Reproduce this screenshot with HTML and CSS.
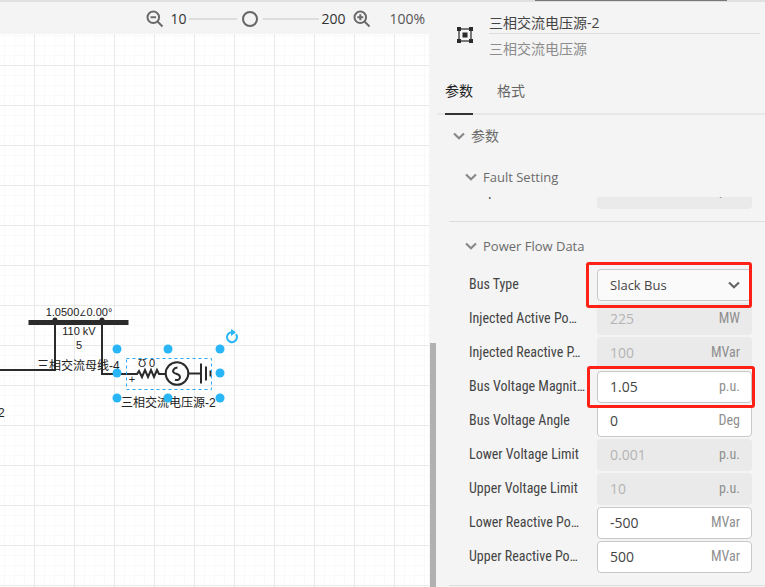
FILE: index.html
```html
<!DOCTYPE html>
<html lang="zh-CN">
<head>
<meta charset="utf-8">
<title>三相交流电压源-2</title>
<link rel="stylesheet" href="styles.css">
</head>
<body>
<svg class="defs" aria-hidden="true">
  <symbol id="chevron" viewBox="0 0 12 8"><path d="M1 1.5 6 6.3 11 1.5" fill="none" stroke="currentColor" stroke-width="2.2"/></symbol>
</svg>
<div class="app">
  <main class="workspace">
    <div class="toolbar">
      <button class="icon-button" type="button" aria-label="缩小">
        <svg width="18" height="18" viewBox="0 0 18 18" fill="none" stroke="currentColor" stroke-width="2"><circle cx="7.3" cy="7.3" r="5.8"/><path d="M4.5 7.3h5.6M11.5 11.5l5 5"/></svg>
      </button>
      <label for="zoom" class="zoom-min">10</label>
      <input id="zoom" class="zoom-range" type="range" min="10" max="200" value="98">
      <span class="zoom-max">200</span>
      <button class="icon-button" type="button" aria-label="放大">
        <svg width="18" height="18" viewBox="0 0 18 18" fill="none" stroke="currentColor" stroke-width="2"><circle cx="7.3" cy="7.3" r="5.8"/><path d="M4.3 7.3h6M7.3 4.3v6M11.5 11.5l5 5"/></svg>
      </button>
      <span class="zoom-value">100%</span>
    </div>
    <div class="canvas">
      <svg class="diagram" width="260" height="400" viewBox="0 34 260 400">
        <g fill="none" stroke="#2b2b2b" stroke-width="2">
          <path d="M0 370H55V323M102 323V374H135"/>
          <path d="M135 374h2l2-3 3 6 3-7 3 7 3-7 3 7 3-7 2 4h6M188.500 373.500H200"/>
          <circle cx="177" cy="373.500" r="11.300"/>
          <path d="M177.500 367.500c-4 .5-5.500 3.500-3.500 5.200 1.700 1.300 6 1.300 6 4.300 0 2.500-2.200 3.500-5 2.700"/>
          <path d="M201 363.500v20M206 366.500v14M210.500 370.500v6"/>
        </g>
        <path d="M28.500 320h100v5h-100zM52.500 320a2.500 2.500 0 0 1 5 0zM99.500 320a2.500 2.500 0 0 1 5 0z" fill="#2b2b2b"/>
        <g class="values">
          <text x="79" y="316">1.0500<tspan class="angle">∠</tspan>0.00°</text>
          <text x="79" y="335">110 kV</text>
          <text x="79" y="349">5</text>
          <text x="142" y="367">Ʊ</text>
          <text x="152" y="367">0</text>
          <text x="132" y="383">+</text>
        </g>
        <g class="names">
          <text x="37" y="370">三相交流母线-4</text>
          <text x="121" y="407">三相交流电压源-2</text>
          <text x="-2" y="417">2</text>
        </g>
        <rect x="126.500" y="358.500" width="85" height="31" fill="none" stroke="#29a6f5" stroke-dasharray="3 3"/>
        <g fill="#29b6f6">
          <circle cx="117" cy="349" r="4.500"/><circle cx="168" cy="349" r="4.500"/><circle cx="220" cy="349" r="4.500"/>
          <circle cx="117" cy="373" r="4.500"/><circle cx="220" cy="373" r="4.500"/>
          <circle cx="117" cy="398" r="4.500"/><circle cx="168" cy="398" r="4.500"/><circle cx="220" cy="398" r="4.500"/>
        </g>
        <path d="M231.500 332.200a5 5 0 1 0 4.500 2" fill="none" stroke="#29b6f6" stroke-width="2"/>
        <path d="M231 329l5 3.200-5 3.800z" fill="#29b6f6"/>
      </svg>
    </div>
  </main>
  <div class="gutter"><div class="scroll-thumb"></div></div>
  <aside class="panel">
    <header class="panel-header">
      <svg width="16" height="16" viewBox="0 0 16 16" aria-hidden="true"><path d="M2 2h12v12H2z" fill="none" stroke="#777" stroke-width="2"/><path d="M0 0h4v4H0zM12 0h4v4h-4zM0 12h4v4H0zM12 12h4v4h-4zM5.500 5.500h5v5h-5z" fill="#2b2b2b"/></svg>
      <div class="titles">
        <input class="title" type="text" aria-label="名称" value="三相交流电压源-2">
        <div class="subtitle">三相交流电压源</div>
      </div>
    </header>
    <nav class="tabs">
      <button class="tab active" type="button">参数</button>
      <button class="tab" type="button">格式</button>
    </nav>
    <h2 class="heading"><svg class="chevron"><use href="#chevron"/></svg>参数</h2>
    <section class="group">
      <h3 class="heading sub"><svg class="chevron"><use href="#chevron"/></svg>Fault Setting</h3>
      <div class="scrolled">
        <div class="row"><label for="drop">Drop</label><div class="field off"><input id="drop" type="text" disabled><span class="unit">p.u.</span></div></div>
      </div>
    </section>
    <section class="group">
      <h3 class="heading sub flow"><svg class="chevron"><use href="#chevron"/></svg>Power Flow Data</h3>
      <div class="rows">
        <div class="row"><label for="type">Bus Type</label><div class="field pick marked"><select id="type"><option>Slack Bus</option></select><svg class="chevron arrow"><use href="#chevron"/></svg></div></div>
        <div class="row"><label for="p">Injected Active Po…</label><div class="field off"><input id="p" type="text" value="225" disabled><span class="unit">MW</span></div></div>
        <div class="row"><label for="q">Injected Reactive P…</label><div class="field off"><input id="q" type="text" value="100" disabled><span class="unit">MVar</span></div></div>
        <div class="row"><label for="v">Bus Voltage Magnit…</label><div class="field marked"><input id="v" type="text" value="1.05"><span class="unit">p.u.</span></div></div>
        <div class="row"><label for="a">Bus Voltage Angle</label><div class="field"><input id="a" type="text" value="0"><span class="unit">Deg</span></div></div>
        <div class="row"><label for="vl">Lower Voltage Limit</label><div class="field off"><input id="vl" type="text" value="0.001" disabled><span class="unit">p.u.</span></div></div>
        <div class="row"><label for="vu">Upper Voltage Limit</label><div class="field off"><input id="vu" type="text" value="10" disabled><span class="unit">p.u.</span></div></div>
        <div class="row"><label for="ql">Lower Reactive Po…</label><div class="field"><input id="ql" type="text" value="-500"><span class="unit">MVar</span></div></div>
        <div class="row"><label for="qu">Upper Reactive Po…</label><div class="field"><input id="qu" type="text" value="500"><span class="unit">MVar</span></div></div>
      </div>
    </section>
  </aside>
</div>
</body>
</html>
```
FILE: styles.css
```css
* { box-sizing: border-box; }
body {
  margin: 0;
  background: #f4f4f4;
  color: #444;
  font: 14px/20px "Open Sans", "Noto Sans CJK SC", sans-serif;
}
button, input, select { font: inherit; color: inherit; border: 0; padding: 0; background: none; }
.defs { display: none; }
.app {
  display: flex;
  min-height: 100vh;
  border-top: 2px solid #e0e0e0;
}
.workspace { flex: 1; min-width: 0; display: flex; flex-direction: column; }
.toolbar {
  height: 32px;
  display: flex;
  align-items: center;
  justify-content: flex-end;
  padding: 2px 4px 0 0;
}
.icon-button { width: 18px; height: 18px; color: #6b6b6b; }
.icon-button svg { display: block; }
.zoom-min { margin: 0 3px 0 6px; color: #333; }
.zoom-max { margin: 0 8px 0 2px; color: #333; }
.zoom-value { margin-left: 18px; color: #555; }
.zoom-range {
  appearance: none;
  width: 130px;
  height: 20px;
  margin: 0;
  background: linear-gradient(#ddd, #ddd) center / 100% 2px no-repeat;
}
.zoom-range::-webkit-slider-thumb {
  appearance: none;
  width: 16px;
  height: 16px;
  border: 2px solid #666;
  border-radius: 50%;
  background: #f4f4f4;
  box-shadow: 0 0 0 5px #f4f4f4;
}
.canvas {
  flex: 1;
  overflow: hidden;
  background:
    repeating-linear-gradient(90deg, #e9e9e9 0 1px, transparent 1px 40px) 34px 0 / 40px 40px,
    repeating-linear-gradient(#e9e9e9 0 1px, transparent 1px 40px) 0 31px / 40px 40px,
    repeating-linear-gradient(90deg, #f9f9f9 0 1px, transparent 1px 10px) 4px 0 / 10px 10px,
    repeating-linear-gradient(#f9f9f9 0 1px, transparent 1px 10px) 0 1px / 10px 10px,
    #fff;
}
.diagram { display: block; font-family: "Liberation Sans", "Noto Sans CJK SC", sans-serif; fill: #222; }
.values { font-size: 11px; text-anchor: middle; }
.angle { font: 8px "DejaVu Sans", sans-serif; }
.names { font-size: 12px; }
.gutter { width: 8px; padding: 341px 1px 0; display: flex; }
.scroll-thumb { flex: 1; background: #b1b1b1; }
.panel {
  width: 328px;
  background: linear-gradient(#777, #777) 98px -2px / 192px 1px no-repeat;
  background-origin: border-box;
  margin-top: -2px;
  padding-top: 2px;
  background-position: 98px 0;
}
.panel-header { display: flex; align-items: center; gap: 16px; height: 66px; padding: 0 5px 0 20px; }
.titles { flex: 1; min-width: 0; }
.title { display: block; width: 100%; height: 22px; padding-bottom: 2px; border-bottom: 1px solid #ddd; }
.subtitle { height: 24px; line-height: 30px; color: #8c8c8c; }
.tabs { display: flex; gap: 24px; height: 47px; padding-left: 8px; border-bottom: 2px solid #e7e7e7; }
.tab { height: 47px; padding-bottom: 2px; color: #666; }
.tab.active { color: #222; border-bottom: 2px solid #333; padding-bottom: 0; }
.heading {
  display: flex;
  align-items: center;
  gap: 6px;
  height: 42px;
  margin: 0;
  padding-left: 16px;
  font-size: 14px;
  font-weight: 400;
  color: #6b6b6b;
}
.chevron { width: 12px; height: 8px; color: #888; }
.group { margin-left: 12px; border-bottom: 1px solid #ddd; }
.heading.sub { height: 40px; font-size: 13px; }
.heading.flow { height: 46px; padding-top: 1px; }
.scrolled {
  height: 24px;
  overflow: clip;
  display: flex;
  flex-direction: column;
  justify-content: flex-end;
  padding-bottom: 12px;
}
.scrolled .row { align-items: stretch; }
.rows { display: grid; gap: 2px; padding: 1px 0 12px; }
.row {
  display: grid;
  grid-template-columns: 116px 1fr;
  gap: 12px;
  height: 32px;
  align-items: center;
  padding: 0 13px 0 20px;
  white-space: nowrap;
}
.row label, .unit { font: 14px/20px "Roboto Condensed", "Liberation Sans Narrow", Roboto, sans-serif; }
.row label { padding-bottom: 2px; }
.scrolled label { padding-top: 4px; }
.field {
  position: relative;
  display: flex;
  align-items: center;
  height: 32px;
  padding: 0 11px 2px 12px;
  border: 1px solid #c8c8c8;
  border-radius: 4px;
  background: #fff;
}
.scrolled .field { padding-bottom: 6px; }
.field input, .field select { flex: 1; min-width: 0; width: 0; height: 28px; }
.field select { appearance: none; opacity: 1; font-size: 13px; }
.field.pick { background: #fafafa; padding-bottom: 0; }
.off { background: #eaeaea; border-color: #eaeaea; color: #b4b4b4; }
.unit { color: #8f8f8f; }
.arrow { color: #666; }
.marked::after {
  content: "";
  position: absolute;
  inset: -6px -4px -6px -11px;
  border: 3px solid #ff2116;
  border-radius: 3px;
  pointer-events: none;
  z-index: 1;
}
.pick.marked::after { inset: -8px -1px -8px -12px; }
```
